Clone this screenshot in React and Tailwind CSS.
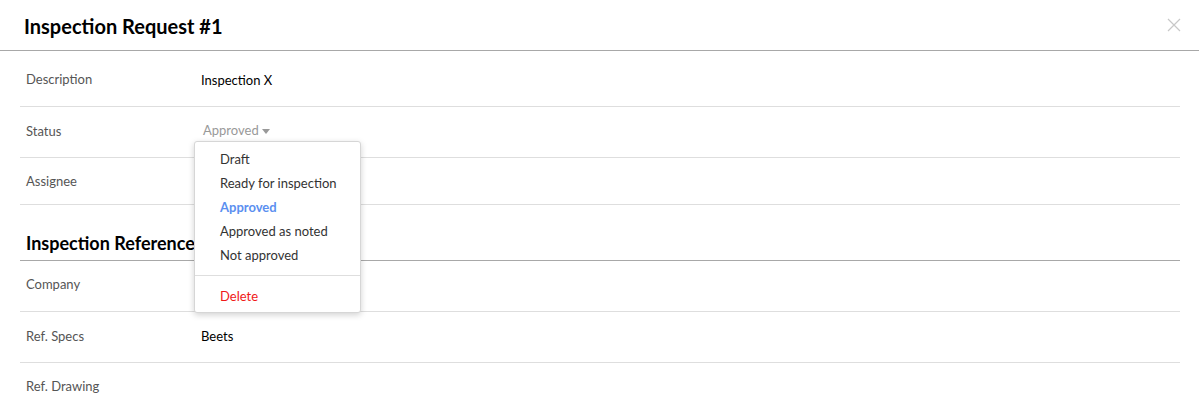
import React from 'react';

const rowsTop = [
  { label: 'Description', value: 'Inspection X', h: 'h-[56px]' },
];

function Row({ label, children, h, last, shift = '' }) {
  return (
    <div className={`flex items-center ${h} ${shift} ${last ? '' : 'border-b border-[#dedede]'}`}>
      <div className="w-[181px] pl-[6px] text-[13px] text-[#555]">{label}</div>
      <div className="relative flex-1 h-full flex items-center text-[13px] text-black">{children}</div>
    </div>
  );
}

function StatusMenu() {
  const items = ['Draft', 'Ready for inspection', 'Approved', 'Approved as noted', 'Not approved'];
  return (
    <div className="absolute left-[-7px] top-[34px] z-10 w-[167px] rounded-[3px] border border-[#d6d6d6] bg-white pt-[5px] pb-[4px] shadow-[0_2px_6px_rgba(0,0,0,0.18)]">
      {items.map((it) => (
        <div
          key={it}
          className={`pl-[25px] leading-[24px] text-[13px] ${
            it === 'Approved' ? 'font-bold text-[#5b8ff0]' : 'text-[#333]'
          }`}
        >
          {it}
        </div>
      ))}
      <div className="my-[8px] border-t border-[#dedede]" />
      <div className="pl-[25px] leading-[24px] text-[13px] text-[#f01818]">Delete</div>
    </div>
  );
}

export default function App() {
  return (
    <div className="w-[1199px] h-[412px] overflow-hidden bg-white font-['Lato','Liberation_Sans',sans-serif]">
      <div className="h-[51px] flex items-center justify-between pl-6 pr-4 border-b border-[#a8a8a8]">
        <h1 className="text-[20px] font-bold text-black mt-[1px]">Inspection Request #1</h1>
        <svg width="14" height="14" viewBox="0 0 14 14" className="mr-[2px]">
          <path d="M1 1L13 13M13 1L1 13" stroke="#c8c8c8" strokeWidth="1.2" />
        </svg>
      </div>

      <div className="px-5 mr-[-1px]">
        {rowsTop.map((r) => (
          <Row key={r.label} label={r.label} h={r.h} shift="pt-[2px]">
            <span className="mt-[2px]">{r.value}</span>
          </Row>
        ))}
        <Row label="Status" h="h-[51px]">
          <span className="pl-[2px] text-[#999] flex items-center gap-[3px] mt-[-2px]">
            Approved
            <svg width="8" height="5" viewBox="0 0 8 5">
              <path d="M0 0H8L4 5Z" fill="#999" />
            </svg>
          </span>
          <StatusMenu />
        </Row>
        <Row label="Assignee" h="h-[47px]" shift="pt-[2px]" />

        <div className="pt-[26px] pb-[5px] border-b border-[#a8a8a8]">
          <h2 className="pl-[6px] text-[18px] font-bold text-black leading-[24px]">Inspection Reference</h2>
        </div>
        <Row label="Company" h="h-[51px]" shift="pb-[2px]" />
        <Row label="Ref. Specs" h="h-[51px]">
          <span>Beets</span>
        </Row>
        <Row label="Ref. Drawing" h="h-[50px]" shift="pb-[3px]" last />
      </div>
    </div>
  );
}
